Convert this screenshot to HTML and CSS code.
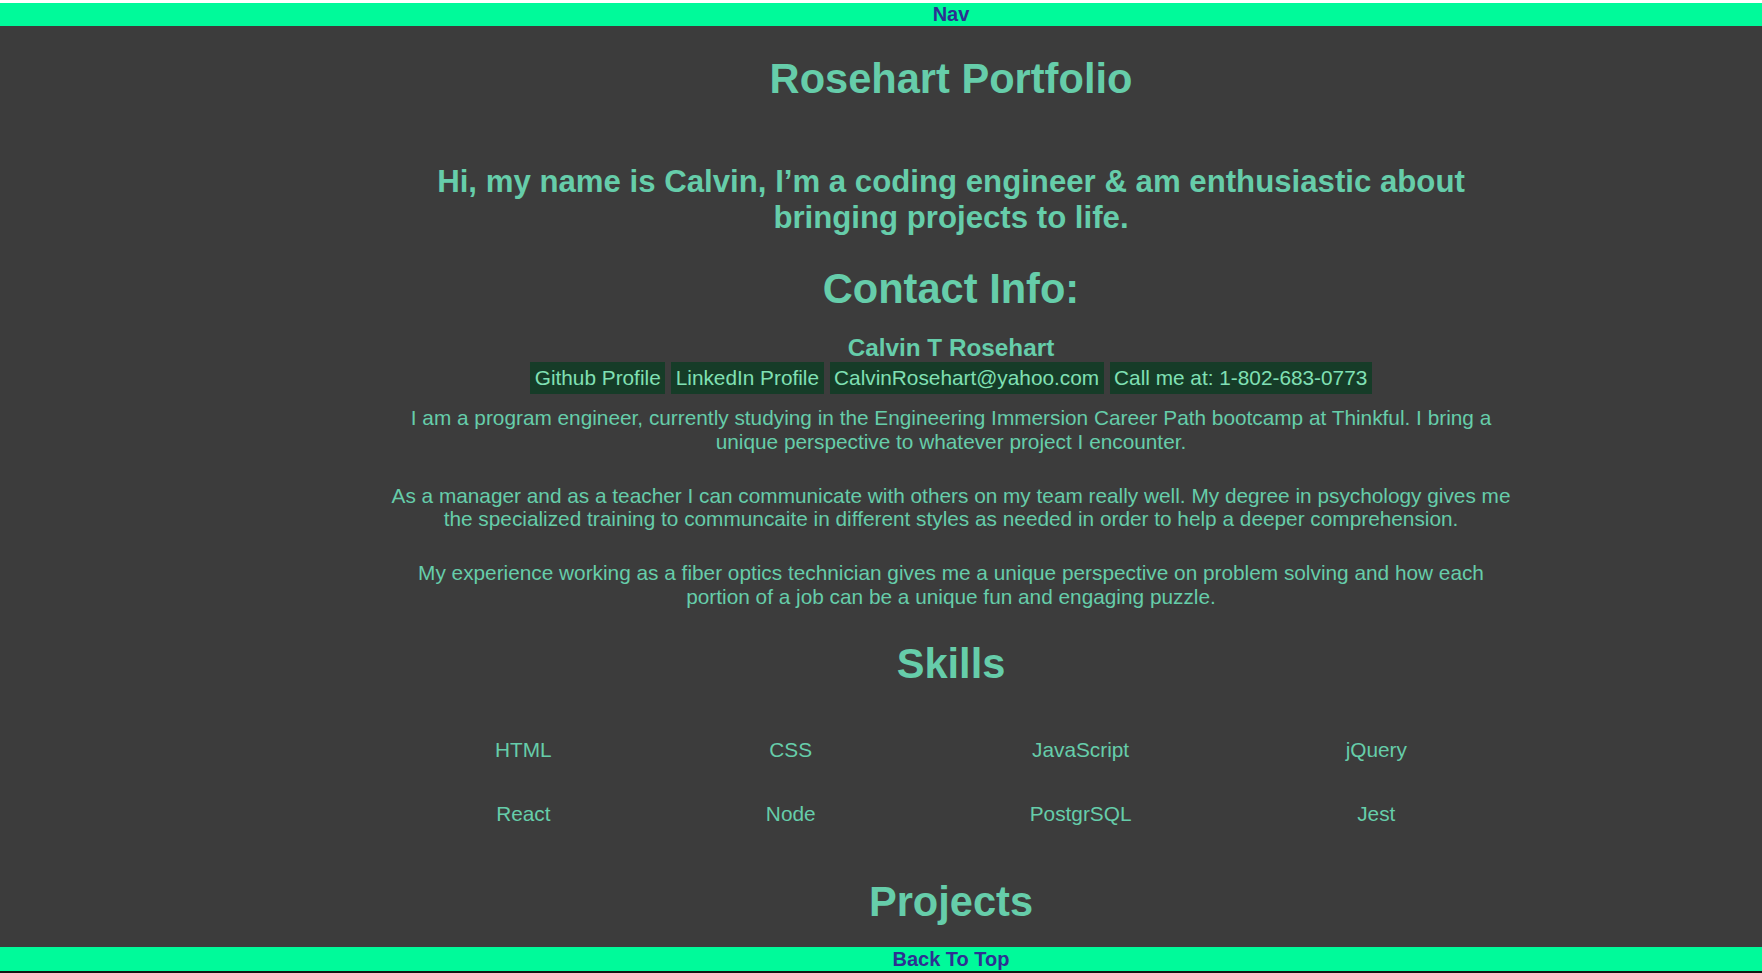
FILE: index.html
```html
<!DOCTYPE html>
<html lang="en">
<head>
<meta charset="utf-8">
<title>Rosehart Portfolio</title>
<link rel="stylesheet" href="styles.css">
</head>
<body>
  <nav class="topbar">Nav</nav>
  <main class="content">
    <div class="inner">
      <h1 class="title">Rosehart Portfolio</h1>
      <h2 class="intro">Hi, my name is Calvin, I’m a coding engineer &amp; am enthusiastic about bringing projects to life.</h2>
      <h2 class="section-title contact-title">Contact Info:</h2>
      <h3 class="name">Calvin T Rosehart</h3>
      <div class="links">
        <a class="link" href="#">Github Profile</a>
        <a class="link" href="#">LinkedIn Profile</a>
        <a class="link" href="#">CalvinRosehart@yahoo.com</a>
        <a class="link" href="#">Call me at: 1-802-683-0773</a>
      </div>
      <p class="about first">I am a program engineer, currently studying in the Engineering Immersion Career Path bootcamp at Thinkful. I bring a unique perspective to whatever project I encounter.</p>
      <p class="about">As a manager and as a teacher I can communicate with others on my team really well. My degree in psychology gives me the specialized training to communcaite in different styles as needed in order to help a deeper comprehension.</p>
      <p class="about">My experience working as a fiber optics technician gives me a unique perspective on problem solving and how each portion of a job can be a unique fun and engaging puzzle.</p>
      <h2 class="section-title skills-title">Skills</h2>
      <ul class="skills">
        <li>HTML</li>
        <li>CSS</li>
        <li>JavaScript</li>
        <li>jQuery</li>
        <li>React</li>
        <li>Node</li>
        <li>PostgrSQL</li>
        <li>Jest</li>
      </ul>
      <h2 class="section-title projects-title">Projects</h2>
      <div class="projects-space"></div>
    </div>
  </main>
  <footer class="bottombar">Back To Top</footer>
</body>
</html>
```

FILE: styles.css
```css
html {
  background: #ffffff;
}

body {
  margin: 3px 0 0 0;
  background: #3c3c3c;
  min-height: calc(100vh - 3px);
  font-family: "Liberation Sans", Arial, sans-serif;
  color: #66cdaa;
  overflow: hidden;
}

.topbar {
  background: #00fa9a;
  color: #2d3192;
  font-weight: bold;
  font-size: 20px;
  line-height: 23px;
  height: 23px;
  text-align: center;
  padding-left: 140px;
}

.content {
  padding-left: 140px;
}

.inner {
  width: 1126px;
  margin: 0 auto;
  text-align: center;
}

.title {
  margin: 29px 0 0;
  font-size: 41.6px;
  line-height: 1.15;
  font-weight: bold;
}

.intro {
  margin: 61px 0 0;
  font-size: 31.2px;
  line-height: 1.15;
  font-weight: bold;
}

.section-title {
  font-size: 41.6px;
  line-height: 1.15;
  font-weight: bold;
}

.contact-title {
  margin: 29px 0 0;
}

.name {
  margin: 22px 0 0;
  font-size: 24.3px;
  line-height: 1.15;
  font-weight: bold;
}

.links {
  margin-top: 0;
  display: flex;
  justify-content: center;
  gap: 6px;
}

.link {
  display: block;
  background: #163c28;
  color: #80e0b4;
  text-decoration: none;
  font-size: 20.8px;
  line-height: 1.15;
  padding: 4px 4.5px;
}

.about {
  margin: 29.5px 0 0;
  font-size: 20.8px;
  line-height: 1.15;
}

.about.first {
  margin-top: 12px;
}

.skills-title {
  margin: 31px 0 0;
}

.skills {
  list-style: none;
  margin: 50px 0 0;
  padding: 0;
  display: grid;
  grid-template-columns: repeat(4, auto);
  row-gap: 41px;
  font-size: 20.8px;
  line-height: 1.15;
}

.projects-title {
  margin: 52px 0 0;
}

.projects-space {
  height: 200px;
}

.bottombar {
  position: fixed;
  left: 0;
  right: 0;
  bottom: 0;
  background: #00fa9a;
  color: #2d3192;
  font-weight: bold;
  font-size: 20px;
  line-height: 23px;
  height: 23px;
  padding: 1px 0 0 140px;
  text-align: center;
  border-bottom: 2px solid #141414;
}
```
